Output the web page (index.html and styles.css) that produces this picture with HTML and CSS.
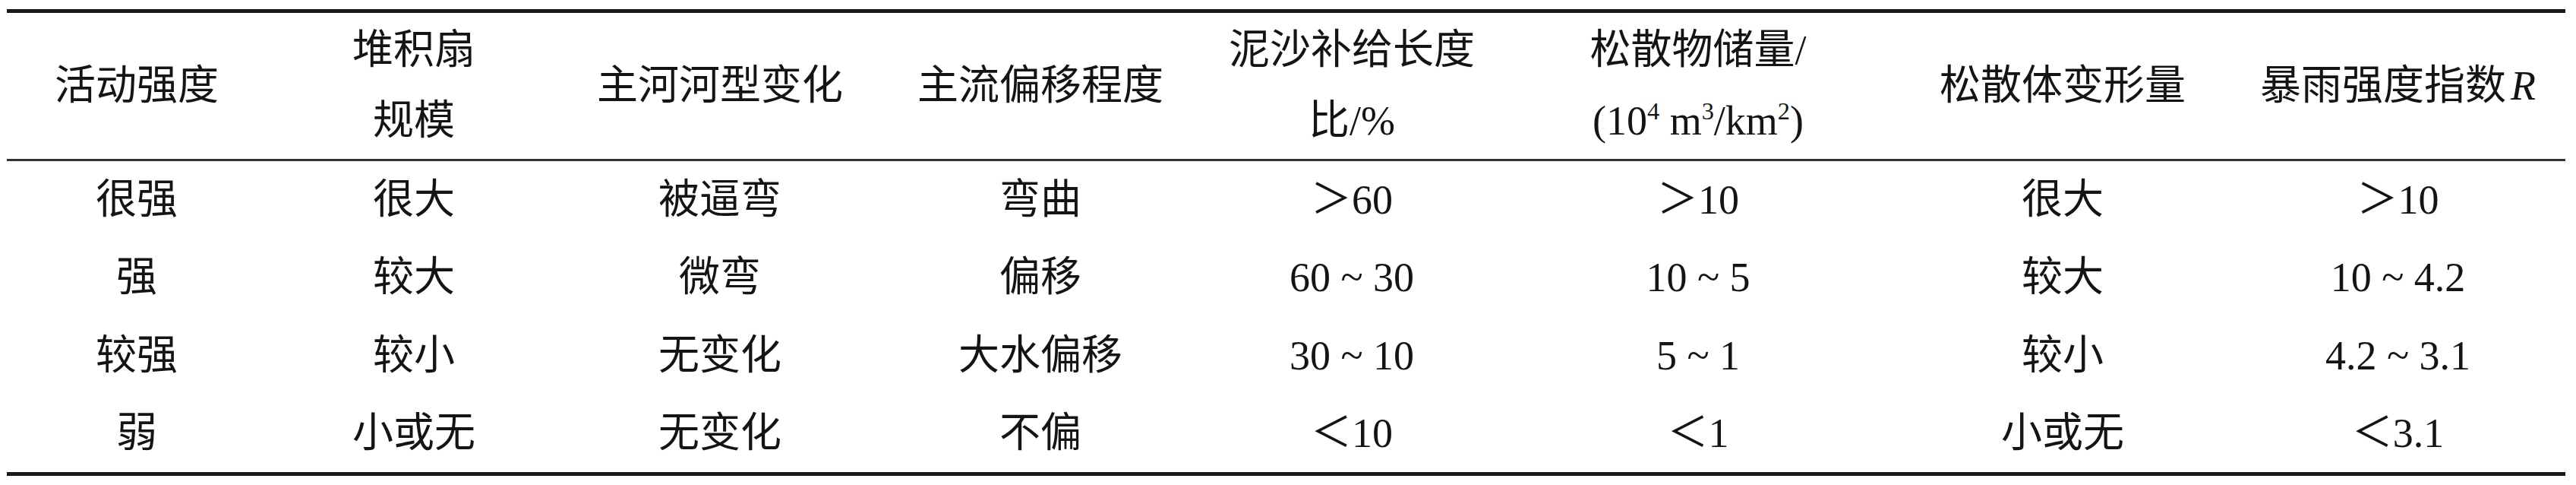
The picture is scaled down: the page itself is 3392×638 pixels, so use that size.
FILE: index.html
```html
<!DOCTYPE html>
<html lang="zh-CN">
<head>
<meta charset="utf-8">
<title>活动强度分级</title>
<link rel="stylesheet" href="styles.css">
</head>
<body>
<table class="grade">
  <colgroup>
    <col class="c1"><col class="c2"><col class="c3"><col class="c4">
    <col class="c5"><col class="c6"><col class="c7"><col class="c8">
  </colgroup>
  <thead>
    <tr>
      <th>活动强度</th>
      <th>堆积扇<br>规模</th>
      <th>主河河型变化</th>
      <th>主流偏移程度</th>
      <th>泥沙补给长度<br>比/%</th>
      <th>松散物储量/<br>(10<sup>4</sup> m<sup>3</sup>/km<sup>2</sup>)</th>
      <th>松散体变形量</th>
      <th>暴雨强度指数<i class="var">R</i></th>
    </tr>
  </thead>
  <tbody>
    <tr>
      <td>很强</td><td>很大</td><td>被逼弯</td><td>弯曲</td>
      <td>＞60</td><td>＞10</td><td>很大</td><td>＞10</td>
    </tr>
    <tr>
      <td>强</td><td>较大</td><td>微弯</td><td>偏移</td>
      <td>60 ~ 30</td><td>10 ~ 5</td><td>较大</td><td>10 ~ 4.2</td>
    </tr>
    <tr>
      <td>较强</td><td>较小</td><td>无变化</td><td>大水偏移</td>
      <td>30 ~ 10</td><td>5 ~ 1</td><td>较小</td><td>4.2 ~ 3.1</td>
    </tr>
    <tr>
      <td>弱</td><td>小或无</td><td>无变化</td><td>不偏</td>
      <td>＜10</td><td>＜1</td><td>小或无</td><td>＜3.1</td>
    </tr>
  </tbody>
</table>
</body>
</html>
```

FILE: styles.css
```css
html, body {
  margin: 0;
  padding: 0;
  background: #ffffff;
}

body {
  padding: 12px 0 0 9px;
  font-family: "Liberation Serif", "Noto Sans CJK SC", serif;
  font-size: 54px;
  font-weight: 400;
  color: #141414;
}

.grade {
  table-layout: fixed;
  width: 3369px;
  border-collapse: separate;
  border-spacing: 0;
  border-top: 5px solid #1a1a1a;
  border-bottom: 5px solid #1a1a1a;
}

.c1 { width: 342px; }
.c2 { width: 388px; }
.c3 { width: 418px; }
.c4 { width: 426px; }
.c5 { width: 394px; }
.c6 { width: 518px; }
.c7 { width: 442px; }
.c8 { width: 441px; }

.grade th,
.grade td {
  padding: 0;
  text-align: center;
  vertical-align: middle;
  white-space: nowrap;
}

.grade th {
  height: 192px;
  font-weight: 400;
  line-height: 93px;
  border-bottom: 3px solid #333333;
}

.grade td {
  height: 102.25px;
  line-height: 60px;
}

.grade sup {
  font-size: 0.6em;
  line-height: 0;
  vertical-align: 0.62em;
}

.var {
  font-style: italic;
  font-family: "Liberation Serif", serif;
  margin-left: 6px;
}
```
